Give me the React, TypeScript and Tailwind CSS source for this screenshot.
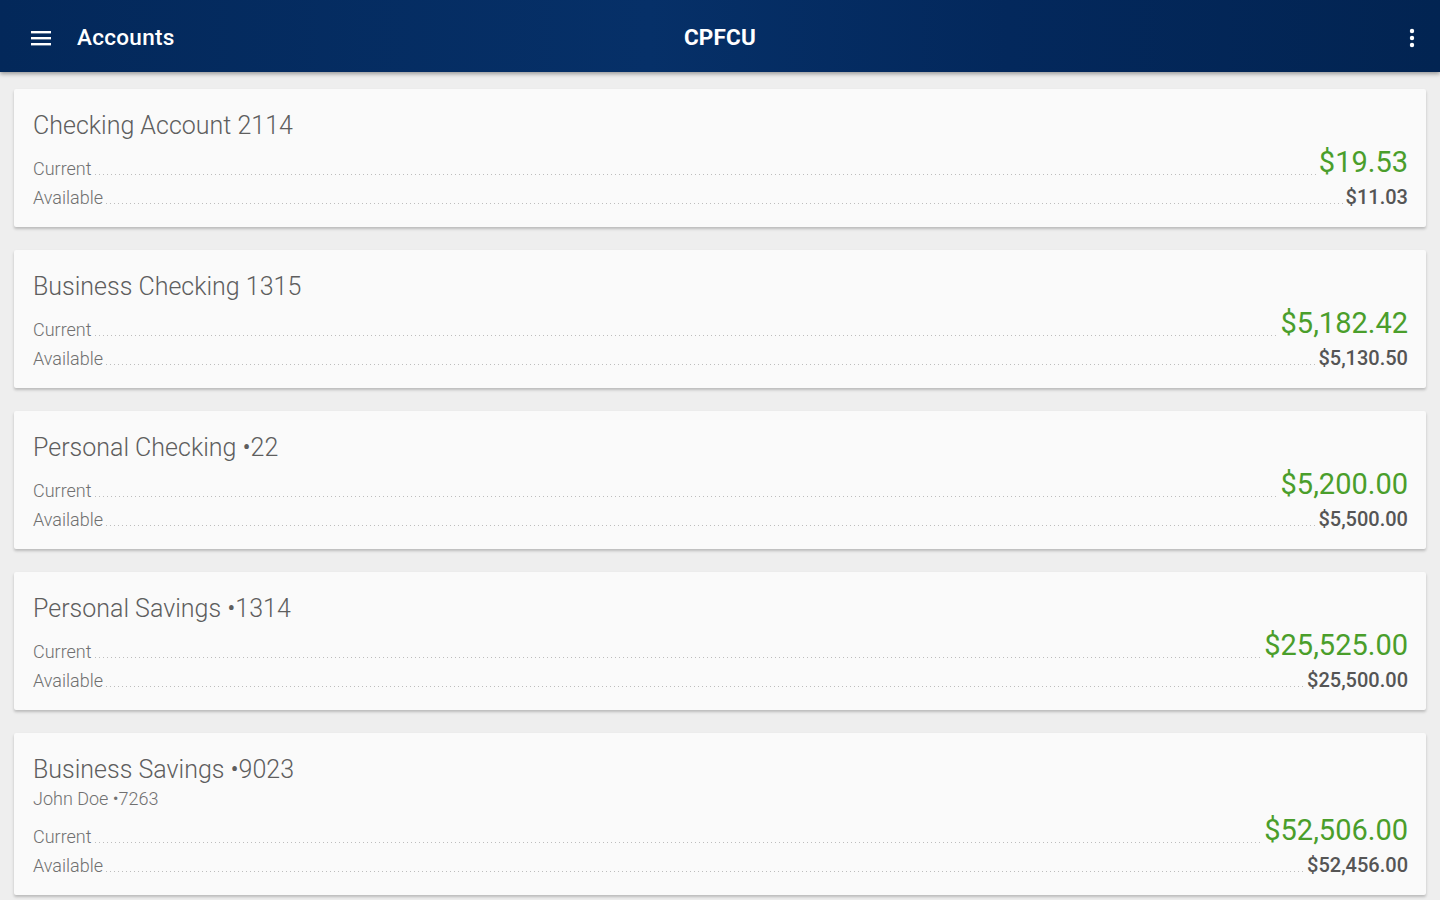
import React from "react";

interface Account {
  name: string;
  owner?: string;
  current: string;
  available: string;
}

const accounts: Account[] = [
  { name: "Checking Account 2114", current: "$19.53", available: "$11.03" },
  { name: "Business Checking 1315", current: "$5,182.42", available: "$5,130.50" },
  { name: "Personal Checking •22", current: "$5,200.00", available: "$5,500.00" },
  { name: "Personal Savings •1314", current: "$25,525.00", available: "$25,500.00" },
  {
    name: "Business Savings •9023",
    owner: "John Doe •7263",
    current: "$52,506.00",
    available: "$52,456.00",
  },
];

function Dots() {
  return (
    <div className="flex-1 mx-[3px] h-px bg-[linear-gradient(to_right,#bdbdbd_1px,transparent_1px)] bg-[length:4px_1px] bg-repeat-x" />
  );
}

function AccountCard({ name, owner, current, available }: Account) {
  return (
    <div className="bg-[#fafafa] rounded-[2px] shadow-[0_2px_3px_rgba(0,0,0,0.22)] pt-[20px] pb-[16px] pl-[19px] pr-[18px]">
      <div className="text-[25px] leading-[34px] font-light text-[#5e5e5e]">{name}</div>
      {owner && (
        <div className="text-[18px] leading-[22px] font-light text-[#707070] mt-[1px]">{owner}</div>
      )}
      <div className={owner ? "mt-[6px]" : "mt-[5px]"}>
        <div className="flex items-baseline">
          <span className="text-[18px] leading-[24px] font-light text-[#707070]">Current</span>
          <Dots />
          <span className="text-[29px] leading-[34px] text-[#4a9e2b] -translate-y-[3px]">{current}</span>
        </div>
        <div className="flex items-baseline mt-[1px]">
          <span className="text-[18px] leading-[24px] font-light text-[#707070]">Available</span>
          <Dots />
          <span className="text-[20px] leading-[28px] font-medium text-[#555555]">{available}</span>
        </div>
      </div>
    </div>
  );
}

export default function App() {
  return (
    <div className="w-[1440px] h-[900px] overflow-hidden bg-[#eeeeee] font-['Roboto',sans-serif]">
      <header className="relative z-10 h-[72px] flex items-center pt-[4px] bg-[linear-gradient(to_right,#03285a,#063068_45%,#03285c_70%,#022452)] shadow-[0_2px_4px_rgba(0,0,0,0.35)] px-[31px] text-white">
        <div className="flex-1 flex items-center">
          <svg width="20" height="16" viewBox="0 0 20 16" className="shrink-0">
            <rect x="0" y="1" width="20" height="2.4" fill="#ffffff" />
            <rect x="0" y="7" width="20" height="2.4" fill="#ffffff" />
            <rect x="0" y="13" width="20" height="2.4" fill="#ffffff" />
          </svg>
          <div className="ml-[26px] text-[22.5px] font-medium tracking-[0.3px]">Accounts</div>
        </div>
        <div className="text-[22.5px] font-bold tracking-[0.2px]">CPFCU</div>
        <div className="flex-1 flex justify-end">
          <svg width="6" height="20" viewBox="0 0 6 20" className="shrink-0 -mr-[6px]">
            <circle cx="3" cy="3" r="2.2" fill="#ffffff" />
            <circle cx="3" cy="10" r="2.2" fill="#ffffff" />
            <circle cx="3" cy="17" r="2.2" fill="#ffffff" />
          </svg>
        </div>
      </header>
      <main className="flex flex-col gap-[23px] pt-[17px] px-[14px]">
        {accounts.map((a) => (
          <AccountCard key={a.name} {...a} />
        ))}
      </main>
    </div>
  );
}
